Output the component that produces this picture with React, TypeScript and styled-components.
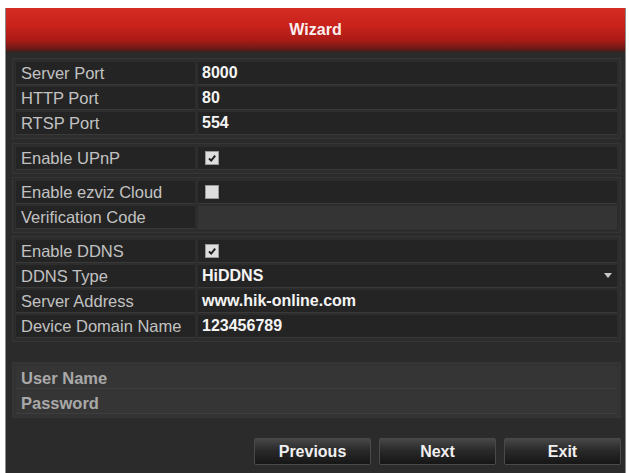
import React from 'react';
import styled, { createGlobalStyle } from 'styled-components';

const GlobalStyle = createGlobalStyle`
  html, body {
    margin: 0;
    padding: 0;
    background: #fff;
  }
  body {
    font-family: 'Liberation Sans', Arial, sans-serif;
  }
`;

type Field = {
  label: string;
  value?: string;
  check?: boolean;
  select?: boolean;
  disabled?: boolean;
};

const groups: Field[][] = [
  [
    { label: 'Server Port', value: '8000' },
    { label: 'HTTP Port', value: '80' },
    { label: 'RTSP Port', value: '554' }
  ],
  [{ label: 'Enable UPnP', check: true }],
  [
    { label: 'Enable ezviz Cloud', check: false },
    { label: 'Verification Code', value: '', disabled: true }
  ],
  [
    { label: 'Enable DDNS', check: true },
    { label: 'DDNS Type', value: 'HiDDNS', select: true },
    { label: 'Server Address', value: 'www.hik-online.com' },
    { label: 'Device Domain Name', value: '123456789' }
  ]
];

const Page = styled.div`
  padding: 8px 3px 0 5px;
  height: 473px;
  box-sizing: border-box;
  overflow: hidden;
`;

const Dialog = styled.div`
  height: 100%;
  background: #2b2b2b;
  border-left: 1px solid #8d8d8d;
  border-right: 1px solid #8d8d8d;
  display: flex;
  flex-direction: column;
`;

const Header = styled.div`
  height: 44px;
  flex: none;
  display: flex;
  align-items: center;
  justify-content: center;
  background: linear-gradient(#d62c23 0%, #c8221b 40%, #ad1b16 72%, #6e1a16 92%, #3a1f1d 100%);
  color: #fbeeee;
  font-size: 16px;
  font-weight: 700;
`;

const Body = styled.div`
  flex: 1;
  padding: 6px 4px 0 6px;
  display: flex;
  flex-direction: column;
`;

const Group = styled.div<{ $gap: number; $light?: boolean }>`
  margin-top: ${({ $gap }) => $gap}px;
  border: 1px solid #363636;
  background: ${({ $light }) => ($light ? '#333333' : '#2d2d2d')};
  padding: 3px;
  display: flex;
  flex-direction: column;
  gap: 2px;
`;

const Row = styled.div`
  display: grid;
  grid-template-columns: 179px 1fr;
  column-gap: 3px;
  height: 23px;
`;

const Label = styled.div`
  background: #242424;
  border-bottom: 1px solid #393939;
  color: #c2c2c2;
  font-size: 16.5px;
  line-height: 22px;
  padding-left: 5px;
  white-space: nowrap;
  overflow: hidden;
`;

const Value = styled.div<{ $disabled?: boolean }>`
  background: ${({ $disabled }) => ($disabled ? '#343434' : '#242424')};
  border-bottom: 1px solid #393939;
  color: #f4f4f4;
  font-size: 16px;
  font-weight: 700;
  line-height: 22px;
  padding-left: 4px;
  display: flex;
  align-items: center;
  justify-content: space-between;
`;

const CheckBox = styled.span<{ $on: boolean }>`
  width: 14px;
  height: 14px;
  margin-left: 3px;
  background: #dedede;
  border: 1px solid #9a9a9a;
  box-sizing: border-box;
  display: flex;
  align-items: center;
  justify-content: center;
`;

const Arrow = styled.svg`
  margin-right: 5px;
`;

const Spacer = styled.div`
  height: 20px;
`;

const WideRow = styled.div`
  height: 23px;
  background: #353535;
  border-bottom: 1px solid #3e3e3e;
  color: #a9a9a9;
  font-size: 16.5px;
  font-weight: 700;
  line-height: 24px;
  padding-left: 5px;
  box-sizing: border-box;
`;

const Footer = styled.div`
  display: flex;
  justify-content: flex-end;
  gap: 8px;
  padding-top: 20px;
`;

const Button = styled.button`
  width: 117px;
  height: 27px;
  border: 1px solid #4a4a4a;
  border-radius: 2px;
  background: linear-gradient(#474747 0%, #2a2a2a 45%, #161616 100%);
  color: #f0f0f0;
  font-family: 'Liberation Sans', Arial, sans-serif;
  font-size: 16px;
  font-weight: 700;
  padding: 0;
`;

function FieldValue({ field }: { field: Field }) {
  if (field.check !== undefined) {
    return (
      <Value>
        <CheckBox $on={field.check}>
          {field.check && (
            <svg width="10" height="10" viewBox="0 0 10 10">
              <polyline points="2,5.5 4.2,7.6 8.2,2.6" fill="none" stroke="#1e1e1e" strokeWidth="2" />
            </svg>
          )}
        </CheckBox>
      </Value>
    );
  }
  return (
    <Value $disabled={field.disabled}>
      <span>{field.value}</span>
      {field.select && (
        <Arrow width="8" height="6" viewBox="0 0 8 6">
          <polygon points="0,0 8,0 4,5" fill="#c8c8c8" />
        </Arrow>
      )}
    </Value>
  );
}

const gaps = [0, 4, 3, 3];

export default function App() {
  return (
    <>
      <GlobalStyle />
      <Page>
        <Dialog>
          <Header>Wizard</Header>
          <Body>
            {groups.map((group, i) => (
              <Group key={i} $gap={gaps[i]}>
                {group.map((field) => (
                  <Row key={field.label}>
                    <Label>{field.label}</Label>
                    <FieldValue field={field} />
                  </Row>
                ))}
              </Group>
            ))}
            <Spacer />
            <Group $gap={0} $light>
              <WideRow>User Name</WideRow>
              <WideRow>Password</WideRow>
            </Group>
            <Footer>
              <Button>Previous</Button>
              <Button>Next</Button>
              <Button>Exit</Button>
            </Footer>
          </Body>
        </Dialog>
      </Page>
    </>
  );
}
